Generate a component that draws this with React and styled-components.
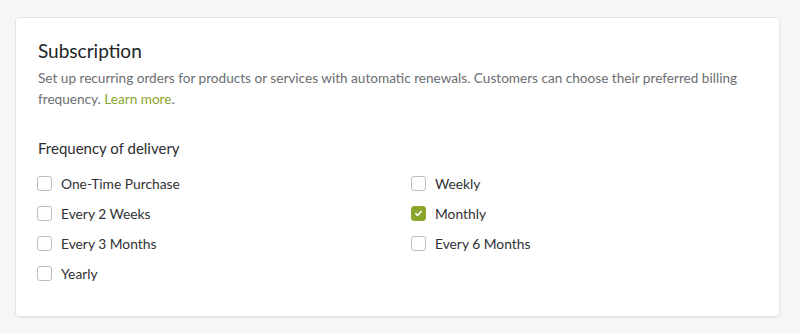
import React, { useState } from 'react';
import styled, { createGlobalStyle } from 'styled-components';

const GlobalStyle = createGlobalStyle`
  html, body {
    margin: 0;
    padding: 0;
    background: #f5f6f8;
    font-family: "Lato", "Open Sans", sans-serif;
  }
`;

const Page = styled.div`
  padding: 17px 20px 16px 15px;
`;

const Card = styled.section`
  background: #fff;
  border: 1px solid #e3e5e8;
  border-radius: 4px;
  box-shadow: 0 1px 2px rgba(0, 0, 0, 0.06);
  padding: 20px 22px 28px 22px;
  height: 300px;
  box-sizing: border-box;
`;

const Title = styled.h2`
  margin: 0;
  font-size: 19px;
  font-weight: 400;
  color: #212326;
  line-height: 26px;
`;

const Description = styled.p`
  margin: 4px 0 0;
  font-size: 13.6px;
  line-height: 21px;
  color: #6b6e73;
`;

const Link = styled.a`
  color: #8aa52c;
  text-decoration: none;
`;

const SectionLabel = styled.h3`
  margin: 28px 0 0;
  font-size: 15px;
  font-weight: 400;
  color: #2c2e31;
  line-height: 20px;
`;

const Options = styled.div`
  display: grid;
  grid-template-columns: 374px 1fr;
  row-gap: 10px;
  margin-top: 15px;
`;

const Option = styled.label`
  display: flex;
  align-items: center;
  gap: 9px;
  height: 20px;
  font-size: 13.8px;
  color: #2f3134;
  cursor: pointer;
`;

const Box = styled.span`
  width: 15px;
  height: 15px;
  margin-left: -1px;
  box-sizing: border-box;
  border-radius: 3px;
  border: 1px solid ${(p) => (p.$checked ? '#8aa52c' : '#b9bec6')};
  background: ${(p) => (p.$checked ? '#8aa52c' : '#fff')};
  display: flex;
  align-items: center;
  justify-content: center;
  flex-shrink: 0;
`;

const Check = () => (
  <svg width="9" height="9" viewBox="0 0 10 10" fill="none">
    <path d="M2 5.2l2 2 4-4.4" stroke="#fff" strokeWidth="1.8" strokeLinecap="round" strokeLinejoin="round" />
  </svg>
);

const options = [
  ['one', 'One-Time Purchase'],
  ['weekly', 'Weekly'],
  ['2weeks', 'Every 2 Weeks'],
  ['monthly', 'Monthly'],
  ['3months', 'Every 3 Months'],
  ['6months', 'Every 6 Months'],
  ['yearly', 'Yearly'],
];

export default function App() {
  const [selected, setSelected] = useState({ monthly: true });

  const toggle = (key) => setSelected((s) => ({ ...s, [key]: !s[key] }));

  return (
    <Page>
      <GlobalStyle />
      <Card>
        <Title>Subscription</Title>
        <Description>
          Set up recurring orders for products or services with automatic renewals. Customers can choose their preferred billing
          frequency. <Link href="#">Learn more</Link>.
        </Description>
        <SectionLabel>Frequency of delivery</SectionLabel>
        <Options>
          {options.map(([key, label]) => (
            <Option key={key} onClick={() => toggle(key)}>
              <Box $checked={!!selected[key]}>{selected[key] && <Check />}</Box>
              {label}
            </Option>
          ))}
        </Options>
      </Card>
    </Page>
  );
}
